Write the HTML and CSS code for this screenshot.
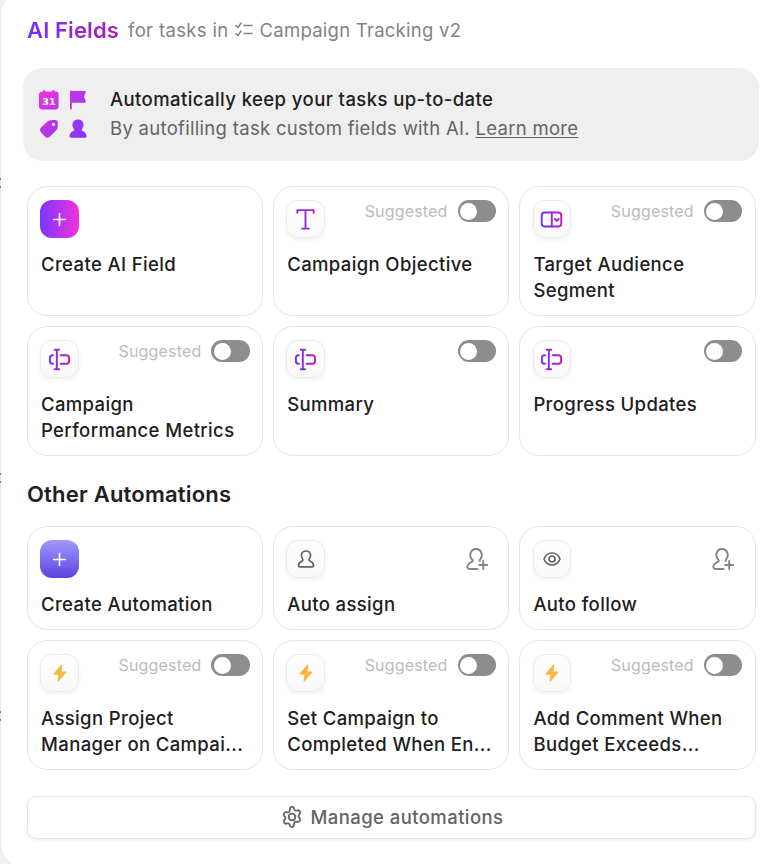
FILE: index.html
```html
<!DOCTYPE html>
<html lang="en">
<head>
  <meta charset="UTF-8">
  <meta name="viewport" content="width=device-width, initial-scale=1.0">
  <title>AI Fields</title>
  <link rel="stylesheet" href="styles.css">
</head>
<body>

  <!-- Shared gradients and icons -->
  <svg class="defs" width="0" height="0" aria-hidden="true">
    <defs>
      <linearGradient id="purple" gradientUnits="userSpaceOnUse" x1="1" y1="0" x2="23" y2="0">
        <stop offset="0" stop-color="#6b35ff"/>
        <stop offset="1" stop-color="#c41bb0"/>
      </linearGradient>
      <linearGradient id="pink" gradientUnits="userSpaceOnUse" x1="0" y1="0" x2="50" y2="50">
        <stop offset="0" stop-color="#f233dc"/>
        <stop offset="1" stop-color="#7a36fb"/>
      </linearGradient>
    </defs>
    <symbol id="plus" viewBox="0 0 24 24">
      <path d="M12 5.800v12.400M5.800 12h12.400"/>
    </symbol>
    <symbol id="summary" viewBox="0 0 24 24">
      <path d="M5.200 7.600H4.500A2.500 2.500 0 0 0 2 10.100v3.800a2.500 2.500 0 0 0 2.500 2.500h.7M13.300 7.600H19.500a2.500 2.500 0 0 1 2.500 2.500v3.800a2.500 2.500 0 0 1-2.500 2.500H13.300M9.200 1.800v20.400M7 1.800h4.600M7 22.200h4.600"/>
    </symbol>
    <symbol id="useradd" viewBox="0 0 24 24">
      <path d="M12.500 22H4.800C2.800 22 1.800 20.500 2.600 18.700C3.400 16.600 5 15.500 7 14.700C8 14.300 8 13.600 7.200 12.700C3.200 8.300 6 2 11 2S18.800 8 15 12.500C14.600 13 14.500 13.500 14.800 14M18.200 14v8M14.200 18h8"/>
    </symbol>
    <symbol id="bolt" viewBox="0 0 24 24">
      <path d="M14 2.500L5 13.200h6L9.800 21.500L19 10.800h-6z"/>
    </symbol>
  </svg>

  <div class="panel">
    <header class="header">
      <h1>AI Fields</h1>
      <span class="header-for">for tasks in</span>
      <svg class="list-icon" viewBox="0 0 18 16">
        <path d="M1 3.500l2 2L6 1M1 11.500l2 2L6 9M9 3.500h8M9 11.500h8"/>
      </svg>
      <span class="header-list">Campaign Tracking v2</span>
    </header>

    <section class="banner">
      <svg class="banner-icons" viewBox="0 0 50 50">
        <g fill="url(#pink)">
          <path d="M3.500 1.500H4V1a1 1 0 0 1 2.200 0V1.500h7v-.5a1 1 0 0 1 2.200 0V1.500h1a3 3 0 0 1 3.200 3v12a3 3 0 0 1-3 3H3a3 3 0 0 1-3-3v-12a3 3 0 0 1 3.500-3z"/>
          <path d="M31 .5h1.200v.5H46a.8.800 0 0 1 .7 1.200L45 6.500L46.700 11.500a.8.800 0 0 1-.7 1.200H32.800V18.500a.9.900 0 0 1-1.800 0V.5z"/>
          <path fill-rule="evenodd" d="M2 37.500L8.500 31.500Q10.300 30 12.500 30H16.500Q18.800 30 18.800 32.500V36.500Q18.800 38.500 17 40.500L10.500 47Q8.500 48.500 6.500 47L2 42.500Q0 40 2 37.500zM14.500 32.800a1.600 1.600 0 1 0 0 3.200a1.600 1.600 0 1 0 0-3.200z"/>
          <path d="M39 29.500c5 0 7.200 5 4.200 9.200c-.8 1.100-.4 2 .6 2.400c2 .8 3.200 2.200 3.700 4.500c.3 1.400-.3 2.200-1.500 2.200H32c-1.200 0-1.800-.8-1.500-2.200c.5-2.300 1.700-3.700 3.700-4.500c1-.4 1.400-1.300.6-2.400c-3-4.200-.8-9.200 4.200-9.200z"/>
        </g>
        <text x="9.900" y="15">31</text>
      </svg>
      <div class="banner-text">
        <div class="banner-title">Automatically keep your tasks up-to-date</div>
        <div class="banner-sub">By autofilling task custom fields with AI. <a href="#">Learn more</a></div>
      </div>
    </section>

    <section class="grid">
      <div class="card">
        <div class="card-top">
          <span class="icon icon-ai"><svg class="plus"><use href="#plus"/></svg></span>
        </div>
        <div class="card-title">Create AI Field</div>
      </div>
      <div class="card">
        <div class="card-top">
          <span class="icon">
            <svg class="purple" viewBox="0 0 24 24"><path d="M3.500 5V2.200h17V5M12 2.200v19.300M8.500 21.500h7"/></svg>
          </span>
          <span class="suggested">Suggested</span>
          <span class="toggle"></span>
        </div>
        <div class="card-title">Campaign Objective</div>
      </div>
      <div class="card">
        <div class="card-top">
          <span class="icon">
            <svg class="purple" viewBox="0 0 24 24"><rect x="1.800" y="4.700" width="20.400" height="14.600" rx="3"/><path d="M12.300 4.700v14.600M15.500 11.500l2 2 2-2"/></svg>
          </span>
          <span class="suggested">Suggested</span>
          <span class="toggle"></span>
        </div>
        <div class="card-title">Target Audience Segment</div>
      </div>
      <div class="card">
        <div class="card-top">
          <span class="icon"><svg class="purple"><use href="#summary"/></svg></span>
          <span class="suggested">Suggested</span>
          <span class="toggle"></span>
        </div>
        <div class="card-title">Campaign Performance Metrics</div>
      </div>
      <div class="card">
        <div class="card-top">
          <span class="icon"><svg class="purple"><use href="#summary"/></svg></span>
          <span class="toggle"></span>
        </div>
        <div class="card-title">Summary</div>
      </div>
      <div class="card">
        <div class="card-top">
          <span class="icon"><svg class="purple"><use href="#summary"/></svg></span>
          <span class="toggle"></span>
        </div>
        <div class="card-title">Progress Updates</div>
      </div>
    </section>

    <h2>Other Automations</h2>

    <section class="grid grid-other">
      <div class="card">
        <div class="card-top">
          <span class="icon icon-auto"><svg class="plus"><use href="#plus"/></svg></span>
        </div>
        <div class="card-title">Create Automation</div>
      </div>
      <div class="card">
        <div class="card-top">
          <span class="icon">
            <svg class="gray" viewBox="0 0 20 20"><path d="M10 2c4.300 0 6 4.200 3.600 7.600c-.9 1.200-.6 2 .5 2.500c2 .9 3.100 2.200 3.400 4.200c.1.900-.4 1.500-1.300 1.500H3.800c-.9 0-1.400-.6-1.300-1.500c.3-2 1.400-3.300 3.400-4.200c1.100-.5 1.400-1.300.5-2.500C4 6.200 5.700 2 10 2z"/></svg>
          </span>
          <svg class="useradd"><use href="#useradd"/></svg>
        </div>
        <div class="card-title">Auto assign</div>
      </div>
      <div class="card">
        <div class="card-top">
          <span class="icon">
            <svg class="gray" viewBox="0 0 20 20"><path d="M2 10C3.500 6 6.500 4 10 4S16.500 6 18 10C16.500 14 13.500 16 10 16S3.500 14 2 10z"/><circle cx="10" cy="10" r="3"/></svg>
          </span>
          <svg class="useradd"><use href="#useradd"/></svg>
        </div>
        <div class="card-title">Auto follow</div>
      </div>
      <div class="card">
        <div class="card-top">
          <span class="icon"><svg class="bolt"><use href="#bolt"/></svg></span>
          <span class="suggested">Suggested</span>
          <span class="toggle"></span>
        </div>
        <div class="card-title">Assign Project<br>Manager on Campai...</div>
      </div>
      <div class="card">
        <div class="card-top">
          <span class="icon"><svg class="bolt"><use href="#bolt"/></svg></span>
          <span class="suggested">Suggested</span>
          <span class="toggle"></span>
        </div>
        <div class="card-title">Set Campaign to<br>Completed When En...</div>
      </div>
      <div class="card">
        <div class="card-top">
          <span class="icon"><svg class="bolt"><use href="#bolt"/></svg></span>
          <span class="suggested">Suggested</span>
          <span class="toggle"></span>
        </div>
        <div class="card-title">Add Comment When<br>Budget Exceeds...</div>
      </div>
    </section>

    <button class="manage" type="button">
      <svg class="gear" viewBox="0 0 24 24">
        <path d="M9.800 2.500C10 1.600 10.800 1 12 1s2 .6 2.200 1.500l.4 1.300c.3.900 1.200 1.400 2.100 1.200l1.400-.3c1-.2 1.900.2 2.500 1.300s.5 2-.1 2.700l-1 1.100c-.6.700-.6 1.700 0 2.400l1 1.100c.6.700.7 1.600.1 2.700s-1.500 1.500-2.500 1.300l-1.400-.3c-.9-.2-1.800.3-2.100 1.200l-.4 1.300C14 22.400 13.200 23 12 23s-2-.6-2.200-1.500l-.4-1.300c-.3-.9-1.200-1.400-2.100-1.200l-1.400.3c-1 .2-1.900-.2-2.500-1.300s-.5-2 .1-2.700l1-1.100c.6-.7.6-1.700 0-2.400l-1-1.100c-.6-.7-.7-1.600-.1-2.700s1.500-1.500 2.500-1.300l1.400.3c.9.200 1.800-.3 2.100-1.200z"/>
        <circle cx="12" cy="12" r="3.600"/>
      </svg>
      Manage automations
    </button>
  </div>

</body>
</html>
```
FILE: styles.css
```css
* {
  box-sizing: border-box;
}
body {
  margin: 0;
  height: 864px;
  overflow: hidden;
  font-family: Inter, "Liberation Sans", sans-serif;
  /* page behind the panel, only a sliver of it is visible */
  background:
    linear-gradient(#8a8a8a, #8a8a8a) 0 178px / 1px 2px no-repeat,
    linear-gradient(#8a8a8a, #8a8a8a) 0 186px / 1px 2px no-repeat,
    linear-gradient(#8a8a8a, #8a8a8a) 0 473px / 1px 2px no-repeat,
    linear-gradient(#8a8a8a, #8a8a8a) 0 481px / 1px 2px no-repeat,
    linear-gradient(#8a8a8a, #8a8a8a) 0 711px / 1px 2px no-repeat,
    linear-gradient(#8a8a8a, #8a8a8a) 0 719px / 1px 2px no-repeat,
    #f3f3f3;
  color: #202020;
}
.defs {
  display: block;
}
svg {
  fill: none;
  stroke-linecap: round;
  stroke-linejoin: round;
  flex-shrink: 0;
}
.panel {
  height: 874px;
  margin: -6px 0 0 1px;
  padding: 22px 5px 0 26px;
  background-color: #fff;
  border-radius: 18px 0 0 24px;
  box-shadow: 0 0 2px rgba(0, 0, 0, 0.15);
}
.header {
  display: flex;
  align-items: center;
  height: 28px;
  font-size: 18.5px;
  color: #838383;
}
.header-for {
  letter-spacing: 0.35px;
}
.header-list {
  letter-spacing: 0.25px;
}
h1 {
  margin: 0 9px 0 0;
  font-size: 22px;
  font-weight: 600;
  letter-spacing: 0.12px;
  background: linear-gradient(90deg, #6b35ff, #b51bb0);
  -webkit-background-clip: text;
  background-clip: text;
  color: transparent;
}
.list-icon {
  width: 18px;
  height: 16px;
  margin: 0 7px 0 6px;
  stroke: #838383;
  stroke-width: 1.5;
}
.banner {
  display: flex;
  width: 736px;
  height: 93px;
  margin: 24px 0 25px -4px;
  padding: 17px 16px;
  background-color: #efefef;
  border-radius: 20px;
}
.banner-icons {
  width: 50px;
  height: 50px;
  margin: 4.5px 21px 0 0;
  overflow: visible;
}
.banner-icons text {
  font-family: "DejaVu Sans", sans-serif;
  font-size: 9.5px;
  font-weight: 700;
  fill: #fff;
  text-anchor: middle;
}
.banner-text {
  font-size: 18.5px;
  line-height: 29px;
}
.banner-title {
  font-weight: 500;
  letter-spacing: 0.42px;
}
.banner-sub {
  color: #646464;
  letter-spacing: 0.3px;
}
.banner-sub a {
  color: inherit;
  text-underline-offset: 2px;
}
.grid {
  display: grid;
  grid-template-columns: repeat(3, 236.3px);
  grid-auto-rows: 130px;
  gap: 10px;
}
.grid-other {
  grid-template-rows: 104px 130px;
}
.grid {
  column-gap: 9.9px;
}
.card {
  padding: 12px 12.4px 0 12px;
  border: 1px solid #e6e6e6;
  border-radius: 20px;
}
.card-top {
  display: flex;
  height: 53px;
}
.icon {
  display: flex;
  align-items: center;
  justify-content: center;
  width: 38.5px;
  height: 38px;
  margin: 1px auto 0 0.3px;
  border: 1px solid #ebebeb;
  border-radius: 12px;
  background: linear-gradient(#fff, #f8f8f8);
  box-shadow: 0 2px 4px rgba(0, 0, 0, 0.06);
}
.icon-ai,
.icon-auto {
  width: 39px;
  margin-left: 0;
  border: none;
  box-shadow: none;
}
.icon-ai {
  background: linear-gradient(90deg, #7a36fb, #f233dc);
}
.icon-auto {
  background: linear-gradient(#9f9bfb, #5c42e0);
}
.plus {
  width: 23px;
  height: 23px;
  stroke: #fff;
  stroke-width: 1.7;
}
.purple {
  width: 23px;
  height: 23px;
  stroke: url(#purple);
  stroke-width: 2;
}
.gray {
  width: 20px;
  height: 20px;
  stroke: #646464;
  stroke-width: 1.7;
}
.bolt {
  width: 20px;
  height: 20px;
  fill: #f7b844;
  stroke: #f7b844;
  stroke-width: 1.5;
}
.useradd {
  width: 24px;
  height: 24px;
  margin: 7.5px 7px 0 0;
  stroke: #838383;
  stroke-width: 1.9;
}
.suggested {
  margin: 1px 10px 0 0;
  font-size: 16px;
  line-height: 23px;
  letter-spacing: 0.18px;
  color: #bbb;
}
.toggle {
  width: 38.5px;
  height: 22px;
  margin-top: 1px;
  padding: 2.5px;
  border-radius: 11px;
  background-color: #8d8d8d;
}
.toggle::before {
  content: "";
  display: block;
  width: 17px;
  height: 17px;
  border-radius: 50%;
  background-color: #fff;
}
.card-title {
  padding-left: 1px;
  font-size: 18.5px;
  font-weight: 500;
  line-height: 25.5px;
  letter-spacing: 0.37px;
}
h2 {
  margin: 24px 0 18px;
  font-size: 22px;
  font-weight: 600;
  line-height: 28px;
  letter-spacing: 0.2px;
}
.manage {
  display: flex;
  align-items: center;
  justify-content: center;
  gap: 8px;
  width: 729px;
  height: 43px;
  margin-top: 26px;
  padding: 0 5px 1px 6px;
  border: 1px solid #e6e6e6;
  border-radius: 9px;
  background-color: #fff;
  box-shadow: 0 1px 3px rgba(0, 0, 0, 0.08);
  font-family: inherit;
  font-size: 18.5px;
  font-weight: 500;
  letter-spacing: 0.42px;
  color: #646464;
}
.gear {
  width: 22px;
  height: 22px;
  stroke: #646464;
  stroke-width: 2;
}
```
